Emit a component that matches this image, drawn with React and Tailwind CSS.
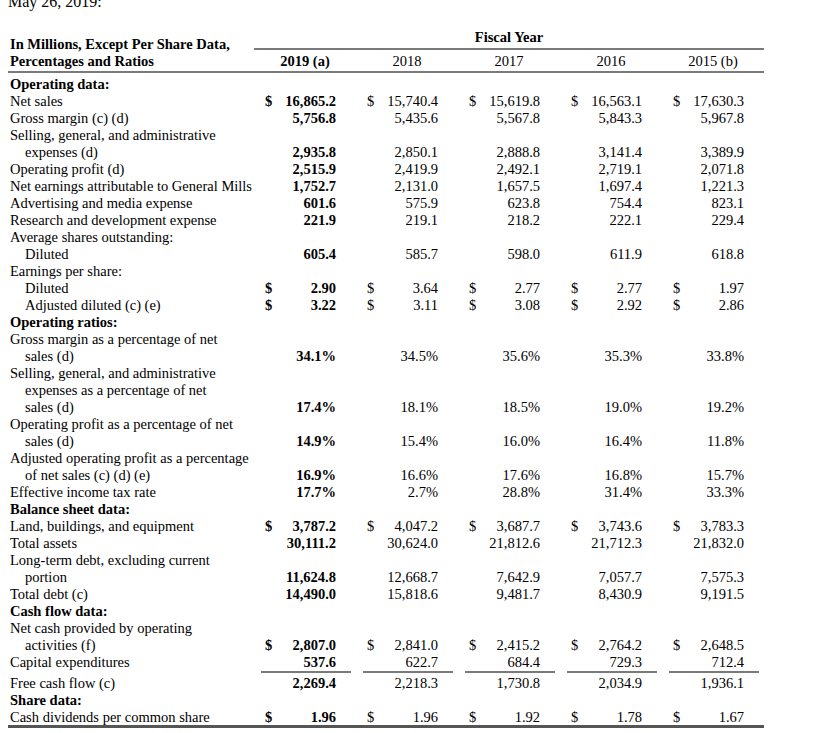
import React from "react";

const years = ["2019 (a)", "2018", "2017", "2016", "2015 (b)"];

// each entry is one printed line of the table
const rows = [
  { label: "Operating data:", head: true },
  { label: "Net sales", dollar: true, values: ["16,865.2", "15,740.4", "15,619.8", "16,563.1", "17,630.3"] },
  { label: "Gross margin (c) (d)", values: ["5,756.8", "5,435.6", "5,567.8", "5,843.3", "5,967.8"] },
  { label: "Selling, general, and administrative" },
  { label: "expenses (d)", indent: true, values: ["2,935.8", "2,850.1", "2,888.8", "3,141.4", "3,389.9"] },
  { label: "Operating profit (d)", values: ["2,515.9", "2,419.9", "2,492.1", "2,719.1", "2,071.8"] },
  { label: "Net earnings attributable to General Mills", values: ["1,752.7", "2,131.0", "1,657.5", "1,697.4", "1,221.3"] },
  { label: "Advertising and media expense", values: ["601.6", "575.9", "623.8", "754.4", "823.1"] },
  { label: "Research and development expense", values: ["221.9", "219.1", "218.2", "222.1", "229.4"] },
  { label: "Average shares outstanding:" },
  { label: "Diluted", indent: true, values: ["605.4", "585.7", "598.0", "611.9", "618.8"] },
  { label: "Earnings per share:" },
  { label: "Diluted", indent: true, dollar: true, values: ["2.90", "3.64", "2.77", "2.77", "1.97"] },
  { label: "Adjusted diluted (c) (e)", indent: true, dollar: true, values: ["3.22", "3.11", "3.08", "2.92", "2.86"] },
  { label: "Operating ratios:", head: true },
  { label: "Gross margin as a percentage of net" },
  { label: "sales (d)", indent: true, values: ["34.1%", "34.5%", "35.6%", "35.3%", "33.8%"] },
  { label: "Selling, general, and administrative" },
  { label: "expenses as a percentage of net", indent: true },
  { label: "sales (d)", indent: true, values: ["17.4%", "18.1%", "18.5%", "19.0%", "19.2%"] },
  { label: "Operating profit as a percentage of net" },
  { label: "sales (d)", indent: true, values: ["14.9%", "15.4%", "16.0%", "16.4%", "11.8%"] },
  { label: "Adjusted operating profit as a percentage" },
  { label: "of net sales (c) (d) (e)", indent: true, values: ["16.9%", "16.6%", "17.6%", "16.8%", "15.7%"] },
  { label: "Effective income tax rate", values: ["17.7%", "2.7%", "28.8%", "31.4%", "33.3%"] },
  { label: "Balance sheet data:", head: true },
  { label: "Land, buildings, and equipment", dollar: true, values: ["3,787.2", "4,047.2", "3,687.7", "3,743.6", "3,783.3"] },
  { label: "Total assets", values: ["30,111.2", "30,624.0", "21,812.6", "21,712.3", "21,832.0"] },
  { label: "Long-term debt, excluding current" },
  { label: "portion", indent: true, values: ["11,624.8", "12,668.7", "7,642.9", "7,057.7", "7,575.3"] },
  { label: "Total debt (c)", values: ["14,490.0", "15,818.6", "9,481.7", "8,430.9", "9,191.5"] },
  { label: "Cash flow data:", head: true },
  { label: "Net cash provided by operating" },
  { label: "activities (f)", indent: true, dollar: true, values: ["2,807.0", "2,841.0", "2,415.2", "2,764.2", "2,648.5"] },
  { label: "Capital expenditures", values: ["537.6", "622.7", "684.4", "729.3", "712.4"] },
  { rule: true },
  { label: "Free cash flow (c)", values: ["2,269.4", "2,218.3", "1,730.8", "2,034.9", "1,936.1"] },
  { label: "Share data:", head: true },
  { label: "Cash dividends per common share", dollar: true, values: ["1.96", "1.96", "1.92", "1.78", "1.67"] },
];

function Row({ label, indent, head, dollar, values }) {
  return (
    <div className="flex h-[17px]">
      <div className={`w-[246px] shrink-0 whitespace-nowrap ${indent ? "pl-[17px]" : "pl-[2px]"} ${head ? "font-bold" : ""}`}>
        {label}
      </div>
      {values &&
        values.map((v, i) => (
          <div
            key={i}
            className={`flex w-[102px] shrink-0 justify-between pl-[11px] pr-[20px] ${i === 0 ? "font-bold" : ""}`}
          >
            <span>{dollar ? "$" : ""}</span>
            <span>{v}</span>
          </div>
        ))}
    </div>
  );
}

// short underlines above the free cash flow total
function SubtotalRule() {
  return (
    <div className="flex h-[4px]">
      <div className="w-[246px] shrink-0" />
      {years.map((y) => (
        <div key={y} className="w-[102px] shrink-0 pl-[7px] pr-[5px]">
          <div className="h-[2px] bg-[#7a7a7a]" />
        </div>
      ))}
    </div>
  );
}

export default function App() {
  return (
    <div className="min-h-screen overflow-hidden bg-white pl-[8px] font-['Liberation_Serif',serif] text-[14.5px] leading-[17px] text-black">
      <div className="-mt-[6px] h-[16px] text-[16px] leading-[16px]">May 26, 2019:</div>

      <div className="w-[756px]">
        {/* header */}
        <div className="flex h-[61px] items-end">
          <div className="w-[246px] shrink-0 pb-[1px] pl-[2px] font-bold">
            <div className="h-[17px] whitespace-nowrap">In Millions, Except Per Share Data,</div>
            <div className="h-[17px]">Percentages and Ratios</div>
          </div>
          <div className="w-[510px] shrink-0 pb-[1px]">
            <div className="h-[17px] text-center font-bold">Fiscal Year</div>
            <div className="mt-[2px] h-[2px] bg-[#7a7a7a]" />
            <div className="mt-[3px] flex h-[17px]">
              {years.map((y, i) => (
                <div key={y} className={`w-[102px] text-center ${i === 0 ? "font-bold" : ""}`}>
                  {y}
                </div>
              ))}
            </div>
          </div>
        </div>
        <div className="h-[2px] bg-[#7a7a7a]" />

        {/* body */}
        <div className="mt-[3px]">
          {rows.map((r, idx) => (r.rule ? <SubtotalRule key={idx} /> : <Row key={idx} {...r} />))}
        </div>
        <div className="-mt-[1px] h-[3px] bg-[#555]" />
      </div>
    </div>
  );
}
